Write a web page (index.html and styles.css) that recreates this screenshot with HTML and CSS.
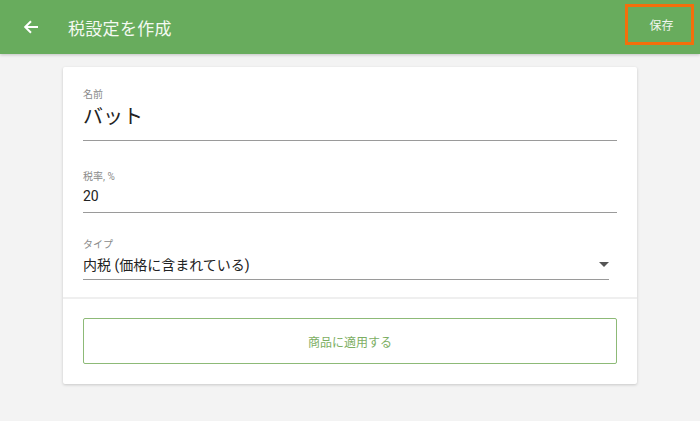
FILE: index.html
```html
<!DOCTYPE html>
<html lang="ja">
<head>
<meta charset="utf-8">
<link rel="stylesheet" href="styles.css">
</head>
<body>
<header class="appbar">
  <button class="back" aria-label="back">
    <svg width="16" height="16" viewBox="0 0 16 16"><path d="M15 8H2.5M8 2.2L2.2 8 8 13.8" fill="none" stroke="#fff" stroke-width="2"/></svg>
  </button>
  <h1 class="title">税設定を作成</h1>
  <div class="spacer"></div>
  <button class="save">保存</button>
</header>
<main class="content">
  <section class="card">
    <div class="fields">
      <div class="field">
        <label class="label">名前</label>
        <div class="value big">バット</div>
      </div>
      <div class="field">
        <label class="label">税率, %</label>
        <div class="value">20</div>
      </div>
      <div class="field select">
        <label class="label">タイプ</label>
        <div class="value">内税 (価格に含まれている)<span class="caret"></span></div>
      </div>
    </div>
    <div class="actions">
      <button class="apply">商品に適用する</button>
    </div>
  </section>
</main>
</body>
</html>
```
FILE: styles.css
```css
html, body { margin: 0; padding: 0; }
body {
  background: #f3f3f3;
  font-family: Roboto, "Noto Sans CJK JP", sans-serif;
  width: 700px;
  height: 421px;
  overflow: hidden;
}
.appbar {
  height: 54px;
  background: #68ac5d;
  display: flex;
  align-items: center;
  box-shadow: 0 1px 3px rgba(0,0,0,0.2);
  position: relative;
}
.back {
  background: none;
  border: 0;
  padding: 0;
  margin-left: 23px;
  width: 16px;
  height: 16px;
  display: flex;
}
.title {
  margin: 0 0 0 29px;
  font-size: 17px;
  font-weight: 400;
  color: #f4f9f2;
  letter-spacing: 0.3px;
}
.spacer { flex: 1; }
.save {
  box-sizing: border-box;
  width: 69px;
  height: 41px;
  margin-right: 6px;
  margin-top: -5px;
  border: 3px solid #f26f0c;
  background: transparent;
  color: #f0f6ee;
  font-family: inherit;
  font-size: 12px;
  padding: 0 0 0 4px;
}
.content {
  display: flex;
  justify-content: center;
  padding-top: 13px;
}
.card {
  width: 574px;
  background: #fff;
  border-radius: 2px;
  box-shadow: 0 1px 3px rgba(0,0,0,0.18);
}
.fields {
  padding: 21px 20px 17px 20px;
  border-bottom: 2px solid #efefef;
}
.field {
  border-bottom: 1px solid #9a9a9a;
  margin-bottom: 29px;
}
.field.select { margin-bottom: 0; margin-top: -4px; }
.label {
  display: block;
  font-size: 10px;
  color: #8a8a8a;
  line-height: 14px;
}
.value {
  font-size: 14px;
  color: #222;
  line-height: 20px;
  padding: 2px 0 6px;
  position: relative;
}
.value.big {
  font-size: 20px;
  line-height: 26px;
  padding: 2px 0 10px;
}
.select { margin-right: 8px; }
.select .value { padding: 3px 0 4px; }
.caret {
  position: absolute;
  right: 0;
  top: 10px;
  width: 0;
  height: 0;
  border-left: 5px solid transparent;
  border-right: 5px solid transparent;
  border-top: 5px solid #555;
}
.actions {
  padding: 19px 20px 20px 20px;
}
.apply {
  width: 100%;
  height: 46px;
  background: #fff;
  border: 1px solid #8dba77;
  border-radius: 2px;
  color: #7cae62;
  font-family: inherit;
  font-size: 12px;
}
```
